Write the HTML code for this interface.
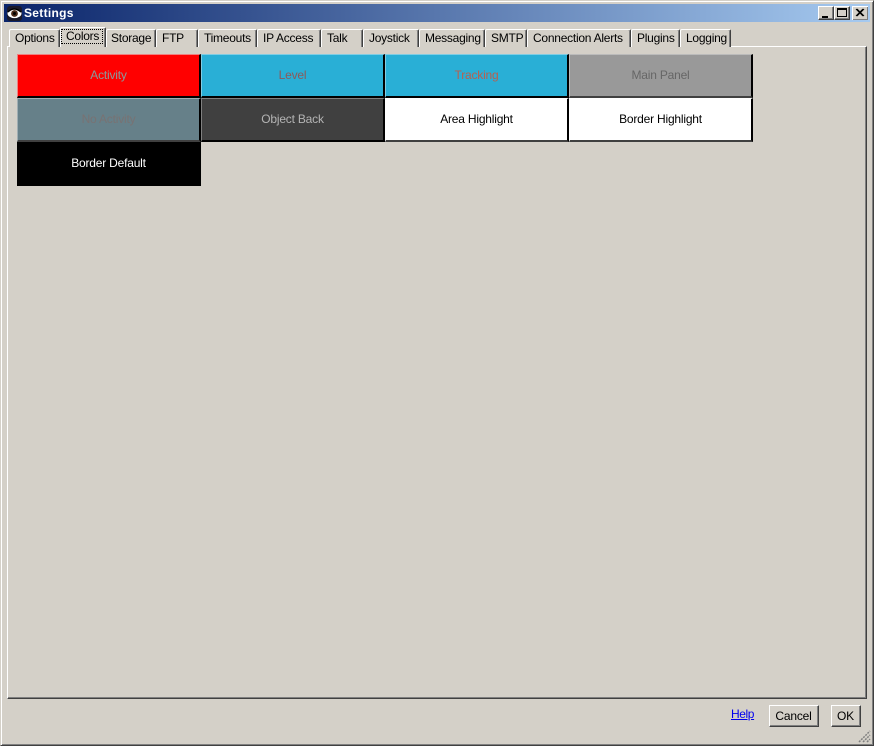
<!DOCTYPE html>
<html><head><meta charset="utf-8"><style>
html,body{margin:0;padding:0;width:874px;height:746px;overflow:hidden;background:#d4d0c8;font:12px "Liberation Sans",sans-serif;color:#000;letter-spacing:-.2px}
div,a,span{position:absolute;box-sizing:border-box}
#win{left:0;top:0;width:874px;height:746px;border:1px solid;border-color:#d4d0c8 #404040 #404040 #d4d0c8;box-shadow:inset 1px 1px 0 #fff,inset -1px -1px 0 #808080}
#title{left:4px;top:4px;width:866px;height:18px;background:linear-gradient(90deg,#0a246a,#a6caf0)}
#ttext{left:24px;top:6px;color:#fff;font-weight:bold;font-size:12px;line-height:14px;letter-spacing:.3px}
.wb{top:6px;width:16px;height:14px;background:#d4d0c8;border:1px solid;border-color:#fff #404040 #404040 #fff;box-shadow:inset -1px -1px 0 #808080}
.tab{top:29px;height:18px;background:#d4d0c8;border-top:1px solid #fff;border-left:1px solid #fff;border-right:1px solid #404040;box-shadow:inset -1px 0 0 #808080;border-top-left-radius:2px;border-top-right-radius:2px;line-height:16px;padding-left:5px;white-space:nowrap;letter-spacing:-.25px}
#panel{left:7px;top:46px;width:860px;height:653px;background:#d4d0c8;border:1px solid;border-color:#fff #404040 #404040 #fff;box-shadow:inset -1px -1px 0 #808080}
.c{width:184px;height:44px;text-align:center;line-height:41px;border-style:solid;border-width:1px 2px 2px 1px;white-space:nowrap}
.btn{top:705px;height:22px;background:#d4d0c8;border:1px solid;border-color:#fff #404040 #404040 #fff;box-shadow:inset -1px -1px 0 #808080;text-align:center;line-height:20px}
</style></head><body>
<div id="win"></div>
<div id="title"></div>
<svg style="position:absolute;left:7px;top:6px" width="15" height="15" viewBox="0 0 15 15"><rect width="15" height="15" rx="3" fill="#1a1a2a"/><ellipse cx="7.5" cy="7.5" rx="7" ry="4.6" fill="#fff"/><circle cx="7.5" cy="7.5" r="3.4" fill="#4a2a1a"/><circle cx="7.5" cy="7.5" r="1.5" fill="#000"/><path d="M1 6Q7 0 14 6" fill="none" stroke="#000" stroke-width="1.5"/></svg>
<div id="ttext">Settings</div>
<div class="wb" style="left:818px"><div style="left:3px;top:9px;width:6px;height:2px;background:#000"></div></div>
<div class="wb" style="left:834px"><div style="left:2px;top:1px;width:10px;height:9px;border:1px solid #000;border-top-width:2px"></div></div>
<svg style="position:absolute;left:852px;top:6px;z-index:1" width="16" height="14" viewBox="0 0 16 14"><rect x=".5" y=".5" width="15" height="13" fill="#d4d0c8" stroke="#808080"/><path d="M0 14V0H16" fill="none" stroke="#fff" stroke-width="2"/><path d="M4 3L11 10M5 3L12 10M11 3L4 10M12 3L5 10" stroke="#000" fill="none"/></svg>

<div id="panel"></div>
<div class="tab" style="left:9px;width:51px">Options</div>
<div class="tab" style="left:106px;width:50px;padding-left:4px">Storage</div>
<div class="tab" style="left:156px;width:42px">FTP</div>
<div class="tab" style="left:198px;width:59px">Timeouts</div>
<div class="tab" style="left:257px;width:64px">IP Access</div>
<div class="tab" style="left:321px;width:42px">Talk</div>
<div class="tab" style="left:363px;width:56px">Joystick</div>
<div class="tab" style="left:419px;width:66px">Messaging</div>
<div class="tab" style="left:485px;width:42px">SMTP</div>
<div class="tab" style="left:527px;width:104px">Connection Alerts</div>
<div class="tab" style="left:631px;width:49px">Plugins</div>
<div class="tab" style="left:680px;width:51px">Logging</div>
<div class="tab" style="left:60px;top:27px;width:46px;height:20px;line-height:16px;padding-left:5px;z-index:2">Colors<div style="left:0;top:1px;width:42px;height:15px;border:1px dotted #000"></div></div>

<div class="c" style="left:17px;top:54px;background:#f00;color:#8a9a9c;border-color:#f08080 #000 #000 #f08080">Activity</div>
<div class="c" style="left:201px;top:54px;background:#29afd6;color:#8c5a5a;border-color:#80cde4 #000 #000 #80cde4">Level</div>
<div class="c" style="left:385px;top:54px;background:#29afd6;color:#b8604f;border-color:#80cde4 #000 #000 #80cde4">Tracking</div>
<div class="c" style="left:569px;top:54px;background:#999;color:#666;border-color:#bbb #000 #404040 #bbb">Main Panel</div>
<div class="c" style="left:17px;top:98px;background:#668089;color:#787273;border-color:#a0aeb3 #000 #404040 #a0aeb3">No Activity</div>
<div class="c" style="left:201px;top:98px;background:#404040;color:#b4b4b4;border-color:#808080 #000 #000 #808080">Object Back</div>
<div class="c" style="left:385px;top:98px;background:#fff;border-color:#fff #000 #404040 #fff">Area Highlight</div>
<div class="c" style="left:569px;top:98px;background:#fff;border-color:#fff #000 #404040 #fff">Border Highlight</div>
<div class="c" style="left:17px;top:142px;background:#000;color:#fff;border-color:#000">Border Default</div>

<a style="left:731px;top:707px;color:#00e;text-decoration:underline;line-height:14px;letter-spacing:-.4px">Help</a>
<div class="btn" style="left:769px;width:50px;padding-right:1px">Cancel</div>
<div class="btn" style="left:831px;width:30px;padding-right:1px">OK</div>
<svg style="position:absolute;left:856px;top:728px" width="16" height="16" viewBox="0 0 16 16"><path d="M3 14L14 3M7 14L14 7M11 14L14 11" stroke="#808080" stroke-width="1.5" stroke-dasharray="2 1" fill="none"/></svg>
</body></html>
